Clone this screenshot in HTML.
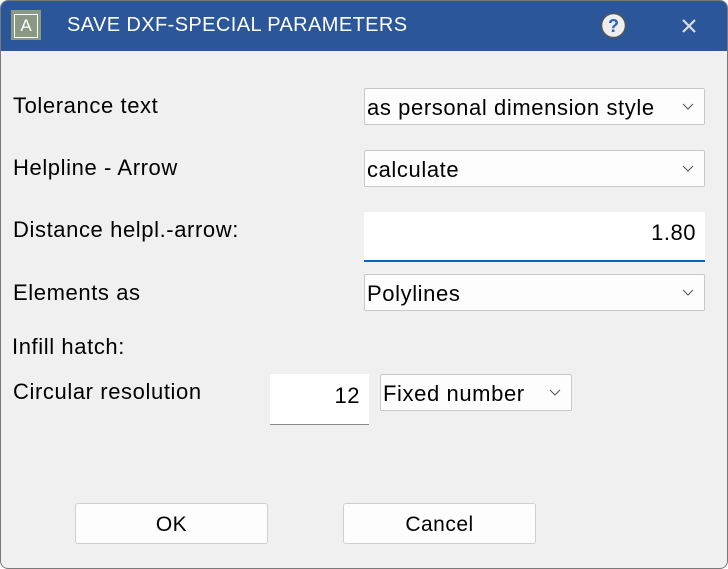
<!DOCTYPE html>
<html><head><style>
body{margin:0;width:728px;height:569px;background:#fff;font-family:"Liberation Sans",sans-serif;overflow:hidden}
.win{position:absolute;left:0;top:0;width:726px;height:567px;border:1px solid #7a7a7a;border-radius:8px;background:#f0f0f0;overflow:hidden}
.title{position:absolute;left:-1px;top:-1px;width:728px;height:51px;background:#2b579a;color:#fff}
.t{position:absolute;left:67px;top:14px;font-size:20px;letter-spacing:0.4px}
.ic{position:absolute;left:11px;top:10px;width:30px;height:30px;background:#8a9a82}
.ic div{position:absolute;left:3px;top:4px;width:22px;height:22px;border:1px solid #fff;color:#fff;font-size:17px;text-align:center;line-height:22px}
.lbl{position:absolute;left:12px;font-size:22px;letter-spacing:0.6px;color:#000}
.dd{position:absolute;background:#fdfdfd;border:1px solid #c8c8c8;border-radius:2px;font-size:22px;letter-spacing:0.6px;box-sizing:border-box;padding-left:2px}
.dd svg{position:absolute;right:10px;top:50%;margin-top:-4px}
.in{position:absolute;background:#fff;font-size:22px;letter-spacing:0.5px;text-align:right;box-sizing:border-box}
.btn{position:absolute;background:#fdfdfd;border:1px solid #cfcfcf;border-radius:3px;font-size:21px;letter-spacing:0.5px;text-align:center;box-sizing:border-box;line-height:41px}
</style></head><body><div class="win">
<div class="title"><div class="ic"><div>A</div></div><div class="t">SAVE DXF-SPECIAL PARAMETERS</div>
<svg style="position:absolute;left:600px;top:12px" width="27" height="27"><circle cx="13.5" cy="13.5" r="12" fill="#eee" stroke="#555" stroke-width="1.5"/><text x="13.5" y="20" font-size="18" font-weight="bold" fill="#2b62c0" text-anchor="middle" font-family="Liberation Sans">?</text></svg>
<svg style="position:absolute;left:681px;top:18px" width="16" height="16"><path d="M2 2L14 14M14 2L2 14" stroke="#ddd" stroke-width="2.2"/></svg>
</div>
<div class="lbl" style="top:92px">Tolerance text</div>
<div class="dd" style="left:363px;top:87px;width:341px;height:37px;line-height:38px">as personal dimension style<svg width="12" height="8"><path d="M1 1L6 6L11 1" fill="none" stroke="#555"/></svg></div>
<div class="lbl" style="top:154px">Helpline - Arrow</div>
<div class="dd" style="left:363px;top:149px;width:341px;height:37px;line-height:38px">calculate<svg width="12" height="8"><path d="M1 1L6 6L11 1" fill="none" stroke="#555"/></svg></div>
<div class="lbl" style="top:216px">Distance helpl.-arrow:</div>
<div class="in" style="left:363px;top:211px;width:341px;height:50px;line-height:42px;padding-right:9px;border-bottom:2px solid #0067c0">1.80</div>
<div class="lbl" style="top:279px">Elements as</div>
<div class="dd" style="left:363px;top:273px;width:341px;height:37px;line-height:38px">Polylines<svg width="12" height="8"><path d="M1 1L6 6L11 1" fill="none" stroke="#555"/></svg></div>
<div class="lbl" style="left:11px;top:333px">Infill hatch:</div>
<div class="lbl" style="top:378px">Circular resolution</div>
<div class="in" style="left:269px;top:373px;width:99px;height:51px;line-height:44px;padding-right:9px;border-bottom:1px solid #888">12</div>
<div class="dd" style="left:379px;top:373px;width:192px;height:37px;line-height:38px">Fixed number<svg width="12" height="8"><path d="M1 1L6 6L11 1" fill="none" stroke="#555"/></svg></div>
<div class="btn" style="left:74px;top:502px;width:193px;height:41px">OK</div>
<div class="btn" style="left:342px;top:502px;width:193px;height:41px">Cancel</div>
</div></body></html>
